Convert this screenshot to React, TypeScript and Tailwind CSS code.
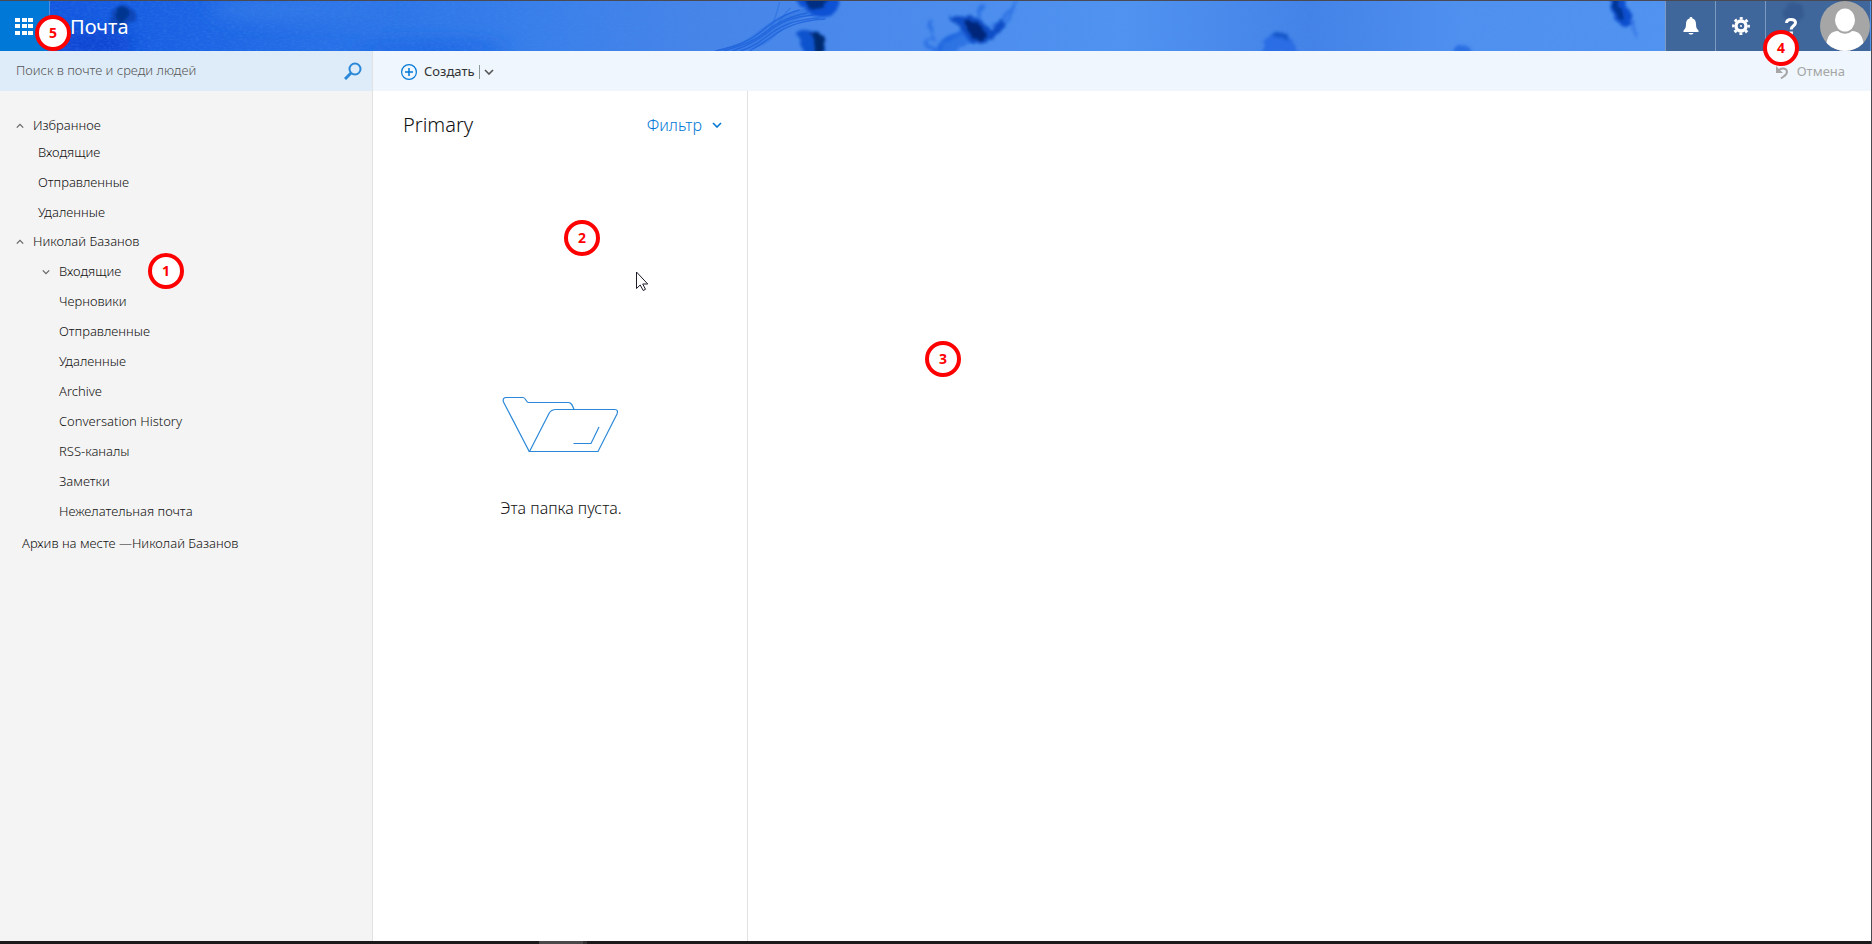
// src/App.tsx
import React, { useState } from "react";

const favorites = ["Входящие", "Отправленные", "Удаленные"];

const folders = [
  "Входящие",
  "Черновики",
  "Отправленные",
  "Удаленные",
  "Archive",
  "Conversation History",
  "RSS-каналы",
  "Заметки",
  "Нежелательная почта",
];

function Chevron({ up, className }: { up?: boolean; className?: string }) {
  return (
    <svg viewBox="0 0 10 6" className={className} fill="none" stroke="currentColor" strokeWidth="1.6" aria-hidden="true">
      <path d={up ? "M1 5l4-4 4 4" : "M1 1l4 4 4-4"} />
    </svg>
  );
}

// numbered callout, the caller places it
function Marker({ n, className }: { n: number; className: string }) {
  return (
    <span
      className={`absolute z-10 flex size-9 items-center justify-center rounded-full border-4 border-[#ff0000] bg-white font-['Noto_Sans',sans-serif] text-sm font-bold text-[#ff0000] ${className}`}
    >
      {n}
    </span>
  );
}

// ink-in-water backdrop of the top bar
function HeaderArt() {
  return (
    <svg className="absolute inset-0 h-full w-full" viewBox="0 0 1872 50" preserveAspectRatio="xMidYMid slice" aria-hidden="true">
      <defs>
        <linearGradient id="sea">
          <stop offset="0.03" stopColor="#1457e0" />
          <stop offset="0.1" stopColor="#1b63e4" />
          <stop offset="0.2" stopColor="#2c74e8" />
          <stop offset="0.3" stopColor="#3b80ea" />
          <stop offset="0.37" stopColor="#4784e8" />
          <stop offset="0.48" stopColor="#4c8aec" />
          <stop offset="0.6" stopColor="#5193f0" />
          <stop offset="0.7" stopColor="#4482e7" />
          <stop offset="0.78" stopColor="#5090ef" />
          <stop offset="1" stopColor="#5495f0" />
        </linearGradient>
        <filter id="wisp" x="-20%" y="-50%" width="140%" height="200%">
          <feGaussianBlur stdDeviation="0.7" />
        </filter>
        <filter id="soft" x="-50%" y="-50%" width="200%" height="200%">
          <feTurbulence type="fractalNoise" baseFrequency="0.12" numOctaves="2" seed="8" />
          <feDisplacementMap in="SourceGraphic" scale="7" xChannelSelector="R" yChannelSelector="G" />
          <feGaussianBlur stdDeviation="1.4" />
        </filter>
        <filter id="haze" x="-50%" y="-100%" width="200%" height="300%">
          <feGaussianBlur stdDeviation="9" />
        </filter>
        <filter id="grain" x="0" y="0" width="100%" height="100%">
          <feTurbulence type="fractalNoise" baseFrequency="0.25 0.6" numOctaves="2" seed="4" />
          <feColorMatrix values="0 0 0 0 0.05  0 0 0 0 0.3  0 0 0 0 0.85  1.4 0 0 0 -0.6" />
        </filter>
      </defs>
      <rect width="1872" height="50" fill="url(#sea)" />
      <g filter="url(#haze)">
        <ellipse cx="95" cy="42" rx="40" ry="14" fill="#0a45d2" />
        <ellipse cx="430" cy="48" rx="80" ry="9" fill="#1a66e4" />
        <ellipse cx="300" cy="8" rx="90" ry="12" fill="#3078e8" />
      </g>
      <rect width="1872" height="50" filter="url(#grain)" opacity="0.4" />

      <g filter="url(#soft)">
        <path d="M112 17c0-9 8-14 15-13 6 2 8 8 10 14-4 5-8 1-9 6-3 7-8 8-13 8-4-4-4-9-3-15z" fill="#0a47ba" />
        <path d="M118 8c4-5 11-3 12 3 1 6-6 7-8 12-5-1-8-9-4-15z" fill="#04348f" />
      </g>

      <path d="M714 50c30-6 36-14 50-24s26-17 52-20l16 8c-26-1-36 4-48 14s-18 20-44 22z" fill="#2167de" opacity="0.35" filter="url(#wisp)" />
      <g fill="none" stroke="#1a5fd9" strokeWidth="1.4" opacity="0.7" filter="url(#wisp)">
        <path d="M716 50c22-5 34-10 45-19s21-17 39-22" />
        <path d="M724 50c20-6 31-10 42-19s22-15 42-19" />
        <path d="M733 50c17-6 26-11 37-20s23-14 44-16" />
        <path d="M741 50c13-4 20-10 31-18s25-14 48-15" />
        <path d="M750 50c8-4 16-10 26-17s27-14 50-15" />
        <path d="M770 28c6-8 7-16 10-27" opacity="0.5" />
        <path d="M779 22c5-7 8-12 12-15" opacity="0.5" />
      </g>
      <g filter="url(#soft)">
        <path d="M794-6h44c6 9 2 18-8 21-12 3-27-1-36-21z" fill="#0a51d4" />
        <path d="M803-6h24c3 12-3 14-11 14-6 0-11-4-13-14z" fill="#042d82" />
        <path d="M797 30c10-4 25-1 28 9 1 6 0 12-1 17h-16c-6-7-7-15-11-26z" fill="#0b53ce" />
        <path d="M810 31c9-1 15 4 15 12l-2 13h-9c3-9 0-17-4-25z" fill="#04296f" />
      </g>

      <path d="M936 52c2-14 14-20 26-20 14 0 20 4 12 7-12 2-16 6-20 13z" fill="#1560dc" opacity="0.55" filter="url(#soft)" />
      <g fill="none" stroke="#1158dc" strokeWidth="3" opacity="0.5" filter="url(#soft)">
        <path d="M930 19l4 19-8 4 11 9" />
        <path d="M940 50c4-12 12-16 24-17" />
        <path d="M956 50c5-8 14-10 24-10" />
        <path d="M983 3l-4 14" strokeWidth="4" />
        <path d="M992 26c14-10 20-16 26-28" />
        <path d="M990 32c10-4 20-12 24-22" />
      </g>
      <g filter="url(#soft)">
        <path d="M949 15c13 0 21 1 30 2l14 12 8-13 4 10-12 12c-8 5-15 7-21 3-9-6-10-16-23-26z" fill="#0b4dc6" />
        <path d="M964 19c10 0 17 3 20 10 4 6 1 11-4 12-9-3-11-12-16-22z" fill="#04277a" />
      </g>

      <g filter="url(#soft)">
        <path d="M1264 56c-3-15 2-24 15-25 11 1 19 10 18 25h-9c-4-7-8-8-12 0z" fill="#2b6de4" />
        <path d="M1271 33c8-4 19-1 20 6-8 0-14-1-20-6z" fill="#1459cb" />
        <path d="M1455 46c6-6 10-2 14 0l6 8h-22z" fill="#2b6fe2" />
        <path d="M1610-6h14c5 11 7 18 10 27-6 8-13 6-17-1-6-5-8-14-7-26z" fill="#0b50cf" />
        <path d="M1611-6h8c1 12 3 18 6 25-8-1-15-12-14-25z" fill="#043596" />
        <path d="M1632 18l6 18" stroke="#3a7ce8" strokeWidth="3" />
        <path d="M1786 4l8-2 8 3 4 8-6 8-12 3-4-8z" fill="#0a3fae" />
      </g>
    </svg>
  );
}

function Header() {
  const tool = "flex w-[50px] items-center justify-center border-l border-[#7c99c2]";
  return (
    <header className="relative flex h-[51px] border-t border-[#4b4a52] text-white">
      <HeaderArt />
      <button aria-label="Приложения" className="relative flex w-[50px] items-center border-r border-[#4f8fe2] bg-[#0078d7] pl-[15px]">
        <svg viewBox="0 0 18 17" className="h-[17px] w-[18px]" fill="currentColor">
          {[0, 6, 13].map((y) =>
            [0, 7, 13].map((x) => <rect key={`${x}-${y}`} x={x} y={y} width="5" height="4" />)
          )}
        </svg>
      </button>
      <h1 className="relative flex items-center pl-5 pt-px text-xl font-normal">Почта</h1>
      <Marker n={5} className="left-[35px] top-[14px]" />

      <div className="relative ml-auto mr-px flex bg-[#3d5f8c]/85">
        <button aria-label="Уведомления" className={tool}>
          <svg viewBox="0 0 16 18" className="h-[18px] w-4" fill="currentColor">
            <path d="M8 0c1 0 1.5.7 1.5 1.5C12 2.2 13 4.5 13 7c0 3.500.8 5 2.500 6.500V15H.5v-1.500C2.200 12 3 10.500 3 7c0-2.500 1-4.800 3.500-5.500C6.500.7 7 0 8 0zM5.500 16h5c-.5 1-1.300 1.500-2.500 1.500S6 17 5.500 16z" />
          </svg>
        </button>
        <button aria-label="Параметры" className={tool}>
          <svg viewBox="0 0 18 18" className="size-[18px]" fill="none" stroke="currentColor">
            <circle cx="9" cy="9" r="5" strokeWidth="3.4" />
            <circle cx="9" cy="9" r="7.700" strokeWidth="2.4" strokeDasharray="3 3.047" strokeDashoffset="1.5" />
            <circle cx="9" cy="9" r="1" fill="currentColor" stroke="none" />
          </svg>
        </button>
        <button aria-label="Справка" className={tool}>
          <svg viewBox="0 0 12 17" className="h-[17px] w-3" fill="none" stroke="currentColor" strokeWidth="3">
            <path d="M1.5 5C1.600 2.700 3.300 1.500 6 1.500s4.500 1.200 4.500 3.300C10.500 7.700 6.200 7.800 6.200 11.500" />
            <path d="M6.200 13.500v3" strokeWidth="3.4" />
          </svg>
        </button>
        <button aria-label="Учетная запись" className="pl-[5px]">
          <svg viewBox="0 0 50 50" className="size-[50px]">
            <clipPath id="face">
              <circle cx="25" cy="25" r="25" />
            </clipPath>
            <g clipPath="url(#face)">
              <rect width="50" height="50" fill="#a6a6a6" />
              <path d="M6 45C7 35 11 30 18 30c4 3.500 10 3.500 14 0 7 0 11 5 12 15l-8 6H14z" fill="#fff" />
              <ellipse cx="25" cy="19" rx="11" ry="12.5" fill="#a6a6a6" />
              <ellipse cx="25" cy="19" rx="10" ry="11.5" fill="#fff" />
            </g>
          </svg>
        </button>
      </div>
      <Marker n={4} className="right-[72px] top-[29px]" />
    </header>
  );
}

function Toolbar() {
  return (
    <div className="flex h-10 bg-[#eff6fd]">
      <form className="flex w-[373px] shrink-0 items-center border-r border-[#e1e1e1] bg-[#deecf9] pl-4 pr-2" onSubmit={(e) => e.preventDefault()}>
        <input
          type="text"
          aria-label="Поиск"
          placeholder="Поиск в почте и среди людей"
          className="min-w-0 flex-1 bg-transparent text-[13px] text-[#333333] outline-none placeholder:text-[#555555]"
        />
        <button type="submit" aria-label="Найти" className="p-0.5 text-[#2b88d8]">
          <svg viewBox="0 0 18 18" className="size-[18px]" fill="none" stroke="currentColor">
            <circle cx="11" cy="7" r="5.5" strokeWidth="2" />
            <path d="M7 11l-6 6" strokeWidth="3" />
          </svg>
        </button>
      </form>

      <div className="flex flex-1 items-center pl-7 pr-[26px] pt-0.5 text-[13px]">
        <button className="flex items-center gap-[7px] font-normal text-[#333333]">
          <svg viewBox="0 0 16 16" className="size-4 text-[#0078d7]" fill="none" stroke="currentColor" strokeWidth="1.2">
            <circle cx="8" cy="8" r="7.400" />
            <path d="M8 4v8M4 8h8" strokeWidth="1.5" />
          </svg>
          Создать
        </button>
        <span className="ml-1 h-3.5 w-px bg-[#8a9a9a]" />
        <button aria-label="Другие варианты" className="px-1 text-[#555555]">
          <Chevron className="h-1.5 w-2.5" />
        </button>
        <button disabled className="ml-auto flex items-center gap-2 font-normal text-[#a6a6a6]">
          <svg viewBox="0 0 14 14" className="size-3.5" fill="none" stroke="currentColor" strokeWidth="2">
            <path d="M3 6c3-4 9-3 9 1 0 3-3 4-6 6.500" />
            <path d="M1 1v7h7z" fill="currentColor" stroke="none" />
          </svg>
          Отмена
        </button>
      </div>
    </div>
  );
}

function GroupHeader({ title, open, onToggle }: { title: string; open: boolean; onToggle: () => void }) {
  return (
    <button onClick={onToggle} aria-expanded={open} className="flex h-6 items-center gap-[9px] pl-4">
      <Chevron up={open} className="h-1.5 w-2 text-[#666666]" />
      {title}
    </button>
  );
}

function Sidebar() {
  const [favOpen, setFavOpen] = useState(true);
  const [boxOpen, setBoxOpen] = useState(true);

  return (
    <nav className="w-[373px] shrink-0 border-r border-[#e1e1e1] bg-[#f4f4f4] pt-[23px] text-[13px] text-[#111111]">
      <GroupHeader title="Избранное" open={favOpen} onToggle={() => setFavOpen(!favOpen)} />
      {favOpen && (
        <ul>
          {favorites.map((f) => (
            <li key={f}>
              <a href="#" className="flex h-[30px] items-center pl-[38px]">{f}</a>
            </li>
          ))}
        </ul>
      )}

      <div className="pt-0.5">
        <GroupHeader title="Николай Базанов" open={boxOpen} onToggle={() => setBoxOpen(!boxOpen)} />
      </div>
      {boxOpen && (
        <ul className="pt-[3px]">
          {folders.map((f, i) => (
            <li key={f} className="relative">
              <a href="#" className="flex h-[30px] items-center pl-[42px]">
                <span className="w-[17px] text-[#666666]">{i === 0 && <Chevron className="h-1.5 w-2" />}</span>
                {f}
              </a>
              {i === 0 && <Marker n={1} className="left-[148px] top-[-4px]" />}
            </li>
          ))}
        </ul>
      )}

      <a href="#" className="mt-0.5 flex h-[30px] items-center pl-[22px]">Архив на месте —Николай Базанов</a>
    </nav>
  );
}

function MessageList() {
  return (
    <section className="relative w-[375px] shrink-0 border-r border-[#e1e1e1]">
      <div className="flex items-center justify-between pl-[30px] pr-[25px] pt-5">
        <h2 className="text-xl text-[#111111]">Primary</h2>
        <button className="flex items-center gap-2.5 text-base text-[#0078d7]">
          Фильтр
          <Chevron className="h-1.5 w-2.5" />
        </button>
      </div>

      <div className="flex flex-col items-center pl-0.5 pt-[257px]">
        <svg viewBox="0 0 118 58" className="h-[58px] w-[118px]" fill="none" stroke="#2b88d8" strokeWidth="1.2" aria-hidden="true">
          <path d="M27.500 56L1.500 6C.5 3 2 1.500 4 1.500h17c3 0 3 5 5.500 5h40c3 0 4 3 5.500 7" />
          <path d="M27.500 55.500L47 17.500c1.500-3 3-4 7-4h59c2.500 0 3 2 2 4.500L96 55.500z" />
          <path d="M71.500 47.500H89l8-16.500" />
        </svg>
        <p className="pt-[42px] text-base text-[#111111]">Эта папка пуста.</p>
      </div>

      <Marker n={2} className="left-[191px] top-[129px]" />
      <svg viewBox="0 0 13 20" className="absolute left-[263px] top-[180px] h-5 w-[13px]" aria-hidden="true">
        <path d="M.5 1v16.500l3.700-3.500 3 5.500 2.300-1.200-2.800-5.300h5z" fill="#fff" stroke="#1c1c28" />
      </svg>
    </section>
  );
}

export default function App() {
  return (
    <div className="flex min-h-screen flex-col border-r border-[#4b4a52] bg-white font-['Noto_Sans',sans-serif] font-light">
      <Header />
      <Toolbar />
      <div className="flex flex-1">
        <Sidebar />
        <MessageList />
        <main className="relative flex-1">
          <Marker n={3} className="left-[177px] top-[250px]" />
        </main>
      </div>
      <div className="flex h-[3px] bg-[#1c1a1a] pl-[539px]">
        <span className="w-11 bg-[#4a4848]" />
        <span className="w-1 bg-[#333131]" />
      </div>
    </div>
  );
}
